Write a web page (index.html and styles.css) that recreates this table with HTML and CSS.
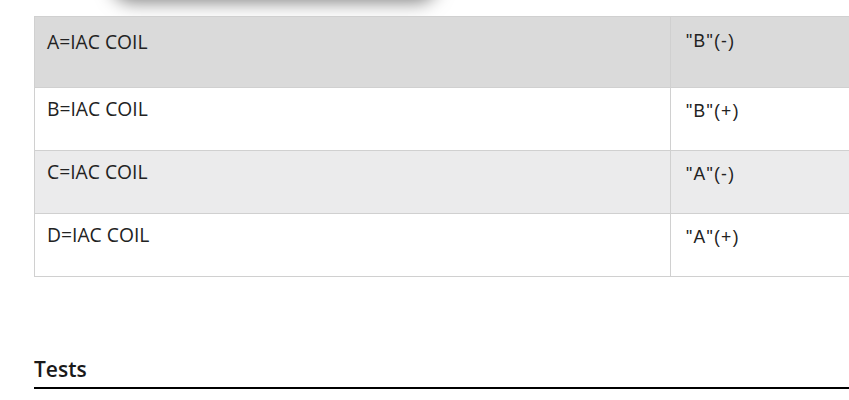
FILE: index.html
```html
<!DOCTYPE html>
<html>
<head>
<meta charset="utf-8">
<link rel="stylesheet" href="styles.css">
</head>
<body>
<div class="card-above"></div>
<div class="content">
  <div class="table-clip">
    <table class="pins">
      <tr class="row head">
        <td class="c1">A=IAC COIL</td>
        <td class="c2">"B"(-)</td>
      </tr>
      <tr class="row">
        <td class="c1">B=IAC COIL</td>
        <td class="c2">"B"(+)</td>
      </tr>
      <tr class="row alt">
        <td class="c1">C=IAC COIL</td>
        <td class="c2">"A"(-)</td>
      </tr>
      <tr class="row">
        <td class="c1">D=IAC COIL</td>
        <td class="c2">"A"(+)</td>
      </tr>
    </table>
  </div>
  <h2 class="section-title">Tests</h2>
</div>
</body>
</html>
```

FILE: styles.css
```css
html, body {
  margin: 0;
  padding: 0;
  background: #fff;
  overflow: hidden;
}
body {
  width: 849px;
  height: 400px;
}
.card-above {
  height: 40px;
  margin: -41px 0 0 112px;
  width: 325px;
  background: #fff;
  border-radius: 20px;
  box-shadow: 0 3px 18px rgba(0,0,0,0.5);
}
.content {
  padding: 17px 0 0 34px;
}
.table-clip {
  width: 815px;
  overflow: hidden;
}
.pins {
  border-collapse: collapse;
  width: 860px;
  font-family: "Open Sans", sans-serif;
  font-size: 19.3px;
  line-height: 24px;
  color: #222;
}
.pins td {
  border: 1px solid #d0d0d0;
  vertical-align: top;
  padding: 9px 12px 0 12px;
  height: 53px;
}
.pins .head td {
  background: #dadada;
  height: 57px;
  padding-top: 13px;
}
.pins .alt td {
  background: #ebebec;
}
.pins .c1 {
  width: 611px;
}
.pins td.c2 {
  font-family: "Liberation Sans", Arial, sans-serif;
  font-size: 17.5px;
  letter-spacing: 1.3px;
  padding-left: 15px;
  padding-top: 11px;
  height: 51px;
}
.pins .head td.c2 {
  padding-top: 12px;
  height: 58px;
}
.section-title {
  margin: 79px 0 0 0;
  width: 815px;
  font-family: "Open Sans", sans-serif;
  font-size: 21px;
  font-weight: 600;
  color: #1a1a1a;
  padding-bottom: 5px;
  border-bottom: 2px solid #000;
  line-height: 26px;
}
```
